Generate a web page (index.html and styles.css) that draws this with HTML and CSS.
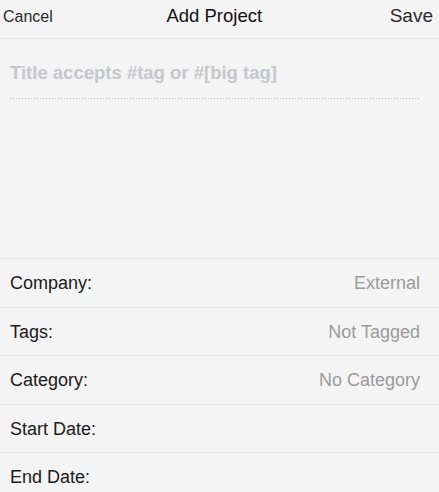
FILE: index.html
```html
<!DOCTYPE html>
<html lang="en">
<head>
<meta charset="utf-8">
<title>Add Project</title>
<link rel="stylesheet" href="styles.css">
</head>
<body>
<div class="screen">
  <header class="nav">
    <span class="nav-btn cancel">Cancel</span>
    <span class="nav-title">Add Project</span>
    <span class="nav-btn save">Save</span>
  </header>
  <section class="title-area">
    <div class="title-input">Title accepts #tag or #[big tag]</div>
    <div class="dotted"></div>
  </section>
  <ul class="rows">
    <li class="row"><span class="label">Company:</span><span class="value">External</span></li>
    <li class="row"><span class="label">Tags:</span><span class="value">Not Tagged</span></li>
    <li class="row"><span class="label">Category:</span><span class="value">No Category</span></li>
    <li class="row"><span class="label">Start Date:</span><span class="value"></span></li>
    <li class="row"><span class="label">End Date:</span><span class="value"></span></li>
  </ul>
</div>
</body>
</html>
```
FILE: styles.css
```css
html, body {
  margin: 0;
  padding: 0;
  background: #f4f4f4;
}
body {
  font-family: "Liberation Sans", Arial, sans-serif;
  color: #1a1a1a;
  overflow: hidden;
}
.screen {
  width: 439px;
  height: 492px;
  overflow: hidden;
}
.nav {
  display: flex;
  justify-content: space-between;
  align-items: baseline;
  height: 33.5px;
  padding: 4.5px 6px 0 3px;
  border-bottom: 1px solid #e4e4e4;
  line-height: 22px;
}
.nav-btn {
  color: #2a2a2a;
}
.cancel {
  font-size: 16px;
}
.save {
  font-size: 19px;
}
.nav-title {
  font-size: 18.5px;
  color: #111;
  margin-left: -14px;
}
.title-area {
  height: 219px;
  padding: 0 20px 0 10px;
  box-sizing: border-box;
  padding-top: 22.5px;
}
.title-input {
  font-size: 18.5px;
  font-weight: bold;
  line-height: 22px;
  color: #c6c6cb;
}
.dotted {
  margin-top: 14.5px;
  height: 1px;
  background: repeating-linear-gradient(to right, #b9b9b9 0 1px, transparent 1px 3px);
}
.rows {
  list-style: none;
  margin: 0;
  padding: 0;
}
.row {
  display: flex;
  justify-content: space-between;
  align-items: center;
  height: 48.5px;
  box-sizing: border-box;
  border-top: 1px solid #e2e2e2;
  padding: 2px 19px 0 10px;
  font-size: 18px;
}
.label {
  color: #1a1a1a;
}
.value {
  color: #9b9b9b;
}
```
